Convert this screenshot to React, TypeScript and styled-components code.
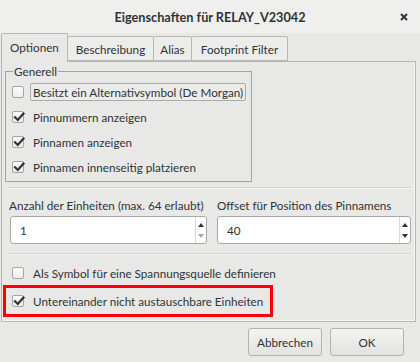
import React from "react";
import styled, { createGlobalStyle } from "styled-components";

const FS = "11.7px";

const Global = createGlobalStyle`
  html, body { margin: 0; padding: 0; background: #e8e8e7; }
  body { font-family: Lato, "Noto Sans", sans-serif; font-size: ${FS}; color: #2e3436; }
  * { box-sizing: border-box; white-space: nowrap; }
`;

const Window = styled.div`
  width: 420px;
  height: 362px;
  background: #e8e8e7;
  display: flex;
  flex-direction: column;
  overflow: hidden;
`;

const TitleBar = styled.div`
  height: 33px;
  flex: none;
  display: grid;
  grid-template-columns: 1fr auto 1fr;
  align-items: center;
  background: #efefee;
`;

const Title = styled.div`
  grid-column: 2;
  font-weight: 700;
  font-size: 12.7px;
  color: #2e3436;
`;

const Close = styled.div`
  grid-column: 3;
  justify-self: end;
  margin-right: 11px;
  width: 10px;
  height: 10px;
  display: flex;
`;

const Content = styled.div`
  padding: 0 4px 0 1px;
  display: flex;
  flex-direction: column;
`;

const TabRow = styled.div`
  display: flex;
  align-items: flex-end;
  height: 28px;
  position: relative;
  z-index: 1;
`;

const Tab = styled.div<{ $active?: boolean; $first?: boolean; $w: number }>`
  width: ${(p) => p.$w}px;
  height: ${(p) => (p.$active ? 29 : 25)}px;
  margin-bottom: ${(p) => (p.$active ? -1 : 0)}px;
  display: flex;
  align-items: center;
  justify-content: center;
  padding-bottom: ${(p) => (p.$active ? 2 : 0)}px;
  border: 1px solid #b6b6b3;
  border-bottom: ${(p) => (p.$active ? "none" : "1px solid #b6b6b3")};
  border-left: ${(p) => (p.$first ? "1px solid #b6b6b3" : "none")};
  border-radius: 2px 2px 0 0;
  background: ${(p) => (p.$active ? "#e8e8e7" : "#ececeb")};
  color: #2e3436;
  font-size: ${FS};
`;

const Panel = styled.div`
  height: 261px;
  border: 1px solid #b6b6b3;
  box-shadow: inset -1px -1px 0 #f6f6f5;
  background: #e8e8e7;
  padding: 0 1px;
  display: flex;
  flex-direction: column;
  align-items: flex-start;
`;

const Frame = styled.fieldset`
  margin: 2px 0 0 2px;
  width: 247px;
  padding: 0 0 2px 6px;
  border: 1px solid #a2a2a0;
  border-radius: 0;
  display: flex;
  flex-direction: column;
`;

const Legend = styled.legend`
  padding: 0 1px;
  margin-left: 1px;
  line-height: 15px;
  font-size: ${FS};
`;

const Row = styled.div`
  height: 25px;
  display: flex;
  align-items: center;
  gap: 6px;
`;

const Box = styled.span`
  width: 12px;
  height: 12px;
  flex: none;
  border: 1px solid #a5a5a3;
  border-radius: 2px;
  background: linear-gradient(#fbfbfb, #ececec);
  position: relative;
  display: flex;
`;

const Text = styled.span<{ $focus?: boolean }>`
  font-size: ${FS};
  height: 18px;
  display: flex;
  align-items: center;
  padding: 0 2px;
  border: 1px solid ${(p) => (p.$focus ? "#aaaaa8" : "transparent")};
  border-radius: 2px;
  background: ${(p) => (p.$focus ? "#ebebea" : "transparent")};
`;

const Separator = styled.div<{ $top: number }>`
  align-self: stretch;
  height: 1px;
  background: #d2d2d0;
  border-bottom: 1px solid #f2f2f1;
  box-sizing: content-box;
  margin: ${(p) => p.$top}px 3px 0 6px;
`;

const Fields = styled.div`
  align-self: stretch;
  display: grid;
  grid-template-columns: 198px 194px;
  column-gap: 10px;
  margin: 9px 0 0 6px;
`;

const Field = styled.div`
  display: flex;
  flex-direction: column;
`;

const FieldLabel = styled.div`
  font-size: ${FS};
  line-height: 15px;
`;

const Spin = styled.div<{ $indent?: number }>`
  margin-top: 3px;
  margin-left: ${(p) => p.$indent ?? 0}px;
  height: 28px;
  border: 1px solid #a8a8a6;
  border-radius: 3px;
  background: #ffffff;
  display: flex;
`;

const SpinValue = styled.div`
  flex: 1;
  display: flex;
  align-items: center;
  padding-left: 9px;
  font-size: ${FS};
`;

const SpinButtons = styled.div`
  width: 11px;
  border-left: 1px solid #dadad8;
  display: flex;
  flex-direction: column;
  align-items: center;
  justify-content: space-around;
  padding: 2px 0;
`;

const Arrow = styled.span<{ $down?: boolean; $disabled?: boolean }>`
  width: 0;
  height: 0;
  border-left: 3.5px solid transparent;
  border-right: 3.5px solid transparent;
  ${(p) =>
    p.$down
      ? `border-top: 4px solid ${p.$disabled ? "#a8a8a8" : "#2e3436"};`
      : `border-bottom: 4px solid ${p.$disabled ? "#a8a8a8" : "#2e3436"};`}
`;

const PlainRow = styled(Row)`
  margin: 5px 0 0 9px;
`;

const Highlight = styled.div`
  margin: 0;
  border: 3px solid #ff0000;
  height: 32px;
  display: flex;
  align-items: center;
  gap: 6px;
  padding: 0 4px 0 6px;
`;

const ButtonRow = styled.div`
  display: flex;
  justify-content: flex-end;
  gap: 8px;
  padding: 6px 16px 0 0;
`;

const Button = styled.button<{ $w: number }>`
  width: ${(p) => p.$w}px;
  height: 28px;
  border: 1px solid #b2b2b0;
  border-radius: 3px;
  background: linear-gradient(#f4f4f3, #e2e2e0);
  font-family: Lato, "Noto Sans", sans-serif;
  font-size: ${FS};
  color: #2e3436;
  padding: 0;
`;

const Check = () => (
  <svg width="14" height="14" viewBox="0 0 14 14" style={{ position: "absolute", left: -1, top: -2 }}>
    <path d="M3 7.2 L5.8 10 L11.5 3.5" fill="none" stroke="#2e3436" strokeWidth="2.2" strokeLinecap="square" />
  </svg>
);

const CheckBox = ({ checked }: { checked?: boolean }) => <Box>{checked && <Check />}</Box>;

export default function App() {
  return (
    <Window>
      <Global />
      <TitleBar>
        <Title>Eigenschaften für RELAY_V23042</Title>
        <Close>
          <svg width="10" height="10" viewBox="0 0 10 10">
            <path d="M2 2 L8 8 M8 2 L2 8" stroke="#2e3436" strokeWidth="2" />
          </svg>
        </Close>
      </TitleBar>
      <Content>
        <TabRow>
          <Tab $active $first $w={67}>Optionen</Tab>
          <Tab $w={86}>Beschreibung</Tab>
          <Tab $w={38}>Alias</Tab>
          <Tab $w={96}>Footprint Filter</Tab>
        </TabRow>
        <Panel>
          <Frame>
            <Legend>Generell</Legend>
            <Row>
              <CheckBox />
              <Text $focus>Besitzt ein Alternativsymbol (De Morgan)</Text>
            </Row>
            <Row>
              <CheckBox checked />
              <Text>Pinnummern anzeigen</Text>
            </Row>
            <Row>
              <CheckBox checked />
              <Text>Pinnamen anzeigen</Text>
            </Row>
            <Row>
              <CheckBox checked />
              <Text>Pinnamen innenseitig platzieren</Text>
            </Row>
          </Frame>
          <Separator $top={5} />
          <Fields>
            <Field>
              <FieldLabel>Anzahl der Einheiten (max. 64 erlaubt)</FieldLabel>
              <Spin $indent={1}>
                <SpinValue>1</SpinValue>
                <SpinButtons>
                  <Arrow />
                  <Arrow $down $disabled />
                </SpinButtons>
              </Spin>
            </Field>
            <Field>
              <FieldLabel>Offset für Position des Pinnamens</FieldLabel>
              <Spin>
                <SpinValue>40</SpinValue>
                <SpinButtons>
                  <Arrow />
                  <Arrow $down />
                </SpinButtons>
              </Spin>
            </Field>
          </Fields>
          <Separator $top={9} />
          <PlainRow>
            <CheckBox />
            <Text>Als Symbol für eine Spannungsquelle definieren</Text>
          </PlainRow>
          <Highlight>
            <CheckBox checked />
            <Text>Untereinander nicht austauschbare Einheiten</Text>
          </Highlight>
        </Panel>
      </Content>
      <ButtonRow>
        <Button $w={74}>Abbrechen</Button>
        <Button $w={74}>OK</Button>
      </ButtonRow>
    </Window>
  );
}
